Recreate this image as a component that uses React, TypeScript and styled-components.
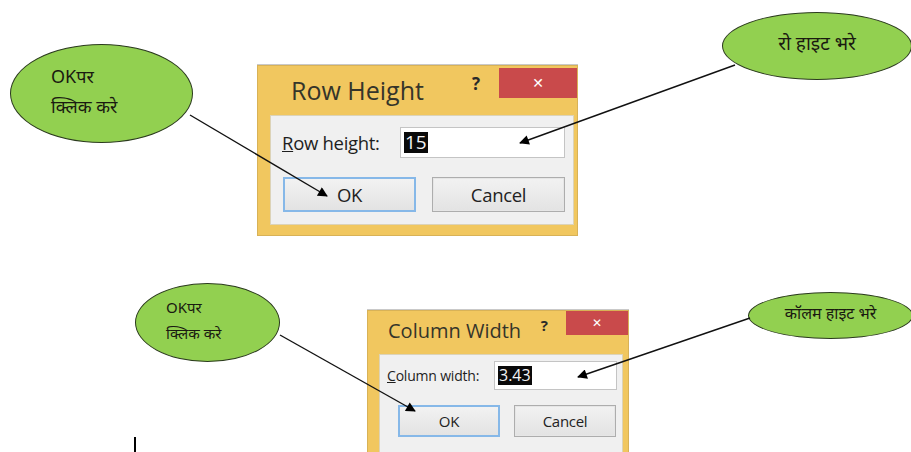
import React from "react";
import styled, { createGlobalStyle } from "styled-components";

const GlobalStyle = createGlobalStyle`
  html, body {
    margin: 0;
    padding: 0;
    background: #ffffff;
  }
`;

const uiFont = `"Open Sans", "Noto Sans", "Liberation Sans", sans-serif`;
const hindiFont = `"Noto Sans Devanagari", "Lohit Devanagari", "Noto Sans", "FreeSans", sans-serif`;

interface DialogSpec {
  title: string;
  label: string;
  accessKey: string;
  value: string;
}

interface Callout {
  left: number;
  top: number;
  width: number;
  height: number;
  lines: string[];
  fontSize: number;
  padLeft?: number;
}

const callouts: Callout[] = [
  { left: 10, top: 44, width: 183, height: 99, lines: ["OKपर", "क्लिक करे"], fontSize: 18, padLeft: 40 },
  { left: 722, top: 12, width: 190, height: 68, lines: ["रो हाइट भरे"], fontSize: 19 },
  { left: 135, top: 283, width: 145, height: 79, lines: ["OKपर", "क्लिक करे"], fontSize: 15, padLeft: 30 },
  { left: 748, top: 292, width: 165, height: 47, lines: ["कॉलम हाइट भरे"], fontSize: 16 },
];

const arrows = [
  { x1: 190, y1: 115, x2: 327, y2: 196 },
  { x1: 735, y1: 65, x2: 520, y2: 143 },
  { x1: 280, y1: 335, x2: 415, y2: 411 },
  { x1: 750, y1: 318, x2: 578, y2: 377 },
];

/**
 * Screenshot figure: two Excel size dialogs with Hindi callouts.
 */
const App: React.FC = () => (
  <>
    <GlobalStyle />
    <Page>
      <TopRow>
        <SizeDialog
          size="large"
          spec={{ title: "Row Height", label: "ow height:", accessKey: "R", value: "15" }}
        />
      </TopRow>
      <BottomRow>
        <SizeDialog
          size="small"
          spec={{ title: "Column Width", label: "olumn width:", accessKey: "C", value: "3.43" }}
        />
      </BottomRow>
      <Cursor />

      {callouts.map((c, i) => (
        <Bubble
          key={i}
          $padLeft={c.padLeft}
          style={{ left: c.left, top: c.top, width: c.width, height: c.height }}
        >
          {c.lines.map((line) => (
            <BubbleLine key={line} $size={c.fontSize}>
              {line}
            </BubbleLine>
          ))}
        </Bubble>
      ))}

      <ArrowLayer width={911} height={452}>
        <defs>
          <marker
            id="head"
            viewBox="0 0 10 10"
            refX="9"
            refY="5"
            markerWidth="9"
            markerHeight="7"
            orient="auto"
          >
            <path d="M0 0 L10 5 L0 10 z" fill="#000" />
          </marker>
        </defs>
        {arrows.map((a, i) => (
          <line
            key={i}
            x1={a.x1}
            y1={a.y1}
            x2={a.x2}
            y2={a.y2}
            stroke="#111"
            strokeWidth={1.4}
            markerEnd="url(#head)"
          />
        ))}
      </ArrowLayer>
    </Page>
  </>
);

type Size = "large" | "small";

const SizeDialog: React.FC<{ spec: DialogSpec; size: Size }> = ({ spec, size }) => (
  <Window $size={size}>
    <TitleBar $size={size}>
      <Title $size={size}>{spec.title}</Title>
      <Help $size={size}>?</Help>
      <CloseButton $size={size}>✕</CloseButton>
    </TitleBar>
    <Body $size={size}>
      <FieldRow $size={size}>
        <Label $size={size}>
          <u>{spec.accessKey}</u>
          {spec.label}
        </Label>
        <Input $size={size}>
          <Selected $size={size}>{spec.value}</Selected>
        </Input>
      </FieldRow>
      <Buttons $size={size}>
        <Button $size={size} $default>
          OK
        </Button>
        <Button $size={size}>Cancel</Button>
      </Buttons>
    </Body>
  </Window>
);

const Page = styled.div`
  position: relative;
  width: 911px;
  height: 452px;
  overflow: hidden;
  background: #fff;
`;

const TopRow = styled.div`
  display: flex;
  padding: 65px 0 0 257px;
  height: 245px;
`;

const BottomRow = styled.div`
  display: flex;
  padding-left: 367px;
`;

const Window = styled.div<{ $size: Size }>`
  display: flex;
  flex-direction: column;
  background: #f1c75f;
  border: 1px solid #d8b257;
  box-shadow: 0 -1px 0 #c9c9c9;
  width: ${(p) => (p.$size === "large" ? 321 : 262)}px;
  height: ${(p) => (p.$size === "large" ? 171 : 150)}px;
  box-sizing: border-box;
  padding: ${(p) => (p.$size === "large" ? "0 3px 10px 12px" : "0 5px 0 11px")};
`;

const TitleBar = styled.div<{ $size: Size }>`
  display: flex;
  align-items: flex-start;
  height: ${(p) => (p.$size === "large" ? 49 : 43)}px;
  font-family: ${uiFont};
`;

const Title = styled.div<{ $size: Size }>`
  flex: 1;
  color: #35352a;
  font-size: ${(p) => (p.$size === "large" ? 25 : 20)}px;
  padding-top: ${(p) => (p.$size === "large" ? 7 : 6)}px;
  padding-left: ${(p) => (p.$size === "large" ? 21 : 9)}px;
`;

const Help = styled.div<{ $size: Size }>`
  font-weight: 700;
  color: #2a2a2a;
  font-size: ${(p) => (p.$size === "large" ? 17 : 15)}px;
  padding-top: ${(p) => (p.$size === "large" ? 6 : 4)}px;
  margin-right: ${(p) => (p.$size === "large" ? 19 : 18)}px;
`;

const CloseButton = styled.div<{ $size: Size }>`
  display: flex;
  align-items: center;
  justify-content: center;
  background: #c94a4b;
  color: #fff;
  font-weight: 700;
  font-family: "DejaVu Sans", sans-serif;
  margin-top: ${(p) => (p.$size === "large" ? 2 : 0)}px;
  margin-right: ${(p) => (p.$size === "large" ? -3 : -5)}px;
  width: ${(p) => (p.$size === "large" ? 78 : 62)}px;
  height: ${(p) => (p.$size === "large" ? 30 : 24)}px;
  font-size: ${(p) => (p.$size === "large" ? 14 : 12)}px;
`;

const Body = styled.div<{ $size: Size }>`
  flex: 1;
  display: flex;
  flex-direction: column;
  background: #f0f0f0;
  border: 1px solid #dcd3b8;
  font-family: ${uiFont};
  color: #1e1e1e;
  padding: ${(p) => (p.$size === "large" ? "11px 8px 0 11px" : "6px 5px 0 7px")};
`;

const FieldRow = styled.div<{ $size: Size }>`
  display: flex;
  align-items: center;
  justify-content: space-between;
`;

const Label = styled.div<{ $size: Size }>`
  font-size: ${(p) => (p.$size === "large" ? 18.5 : 14)}px;
  letter-spacing: ${(p) => (p.$size === "large" ? -0.3 : -0.2)}px;
`;

const Input = styled.div<{ $size: Size }>`
  display: flex;
  align-items: center;
  background: #fff;
  border: 1px solid #c4c4c4;
  box-sizing: border-box;
  padding-left: 3px;
  width: ${(p) => (p.$size === "large" ? 165 : 123)}px;
  height: ${(p) => (p.$size === "large" ? 31 : 29)}px;
`;

const Selected = styled.span<{ $size: Size }>`
  background: #0a0a0a;
  color: #f4f4f4;
  font-size: ${(p) => (p.$size === "large" ? 19 : 16)}px;
  line-height: ${(p) => (p.$size === "large" ? 21 : 19)}px;
  padding: 0 1px;
`;

const Buttons = styled.div<{ $size: Size }>`
  display: flex;
  justify-content: space-between;
  margin-top: ${(p) => (p.$size === "large" ? 19 : 15)}px;
  padding-left: ${(p) => (p.$size === "large" ? 1 : 11)}px;
  padding-right: ${(p) => (p.$size === "large" ? 0 : 1)}px;
`;

const Button = styled.div<{ $size: Size; $default?: boolean }>`
  display: flex;
  align-items: center;
  justify-content: center;
  box-sizing: border-box;
  background: linear-gradient(#f2f2f2, #e3e3e3);
  border: ${(p) => (p.$default ? "2px solid #86b8e8" : "1px solid #adadad")};
  box-shadow: ${(p) => (p.$default ? "none" : "inset 0 0 0 1px #e6e6e6")};
  color: #222;
  width: ${(p) => (p.$size === "large" ? 133 : 102)}px;
  height: ${(p) => (p.$size === "large" ? 35 : 32)}px;
  font-size: ${(p) => (p.$size === "large" ? 18.5 : 15)}px;
  letter-spacing: -0.3px;
`;

const Cursor = styled.div`
  position: absolute;
  left: 134px;
  top: 437px;
  width: 2px;
  height: 15px;
  background: #000;
`;

const Bubble = styled.div<{ $padLeft?: number }>`
  position: absolute;
  box-sizing: border-box;
  border-radius: 50%;
  background: #92d050;
  border: 1.5px solid #2b3a1e;
  display: flex;
  flex-direction: column;
  justify-content: center;
  align-items: ${(p) => (p.$padLeft ? "flex-start" : "center")};
  padding-left: ${(p) => p.$padLeft ?? 0}px;
  gap: 6px;
  font-family: ${hindiFont};
  color: #1a1a10;
`;

const BubbleLine = styled.div<{ $size: number }>`
  font-size: ${(p) => p.$size}px;
  line-height: ${(p) => Math.round(p.$size * 1.35)}px;
  font-weight: 400;
  white-space: nowrap;
`;

const ArrowLayer = styled.svg`
  position: absolute;
  left: 0;
  top: 0;
  pointer-events: none;
`;

export default App;
